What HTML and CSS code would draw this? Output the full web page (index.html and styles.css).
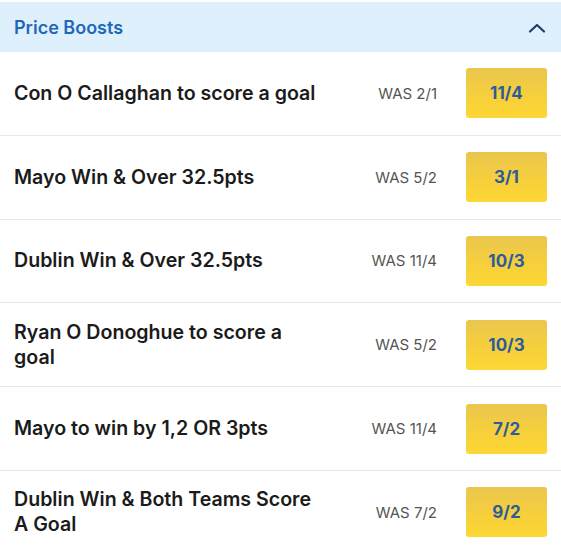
FILE: index.html
```html
<!DOCTYPE html>
<html>
<head>
<meta charset="utf-8">
<link rel="stylesheet" href="styles.css">
</head>
<body>
<div class="panel">
  <div class="header">
    <span class="title">Price Boosts</span>
    <svg class="chev" width="18" height="12" viewBox="0 0 18 12"><path d="M2 9.5 L9 3 L16 9.5" fill="none" stroke="#1d3d6e" stroke-width="2.2" stroke-linecap="round" stroke-linejoin="round"/></svg>
  </div>
  <div class="row"><div class="label">Con O Callaghan to score a goal</div><div class="was">WAS 2/1</div><div class="odds">11/4</div></div>
  <div class="row"><div class="label">Mayo Win &amp; Over 32.5pts</div><div class="was">WAS 5/2</div><div class="odds">3/1</div></div>
  <div class="row"><div class="label">Dublin Win &amp; Over 32.5pts</div><div class="was">WAS 11/4</div><div class="odds">10/3</div></div>
  <div class="row"><div class="label">Ryan O Donoghue to score a goal</div><div class="was">WAS 5/2</div><div class="odds">10/3</div></div>
  <div class="row"><div class="label">Mayo to win by 1,2 OR 3pts</div><div class="was">WAS 11/4</div><div class="odds">7/2</div></div>
  <div class="row"><div class="label">Dublin Win &amp; Both Teams Score A Goal</div><div class="was">WAS 7/2</div><div class="odds">9/2</div></div>
</div>
</body>
</html>
```
FILE: styles.css
```css
html, body { margin: 0; padding: 0; background: #fff; }
body { font-family: Inter, "Noto Sans", sans-serif; }
.panel { padding-top: 2px; }
.header {
  height: 50px;
  background: #dff0fd;
  display: flex;
  align-items: center;
  justify-content: space-between;
  padding: 0 14px 0 14px;
}
.title { color: #1f68b8; font-weight: 600; font-size: 18px; }
.chev { margin-right: 1px; margin-top: 1px; }
.row {
  display: flex;
  align-items: center;
  padding: 16.4px 14px 16.4px 14px;
  border-bottom: 1px solid #e7e7e7;
}
.label {
  flex: 1;
  max-width: 307px;
  font-size: 19.6px;
  font-weight: 600;
  color: #1b1b1b;
  line-height: 25px;
}
.was {
  margin-left: auto;
  margin-right: 29px;
  font-size: 15px;
  color: #555;
}
.odds {
  width: 81px;
  height: 50px;
  border-radius: 3px;
  background: linear-gradient(180deg, #eac64e 0%, #f6cf3c 55%, #fdd733 100%);
  display: flex;
  align-items: center;
  justify-content: center;
  font-size: 17px;
  font-weight: 700;
  color: #2d5c9a;
}
```
